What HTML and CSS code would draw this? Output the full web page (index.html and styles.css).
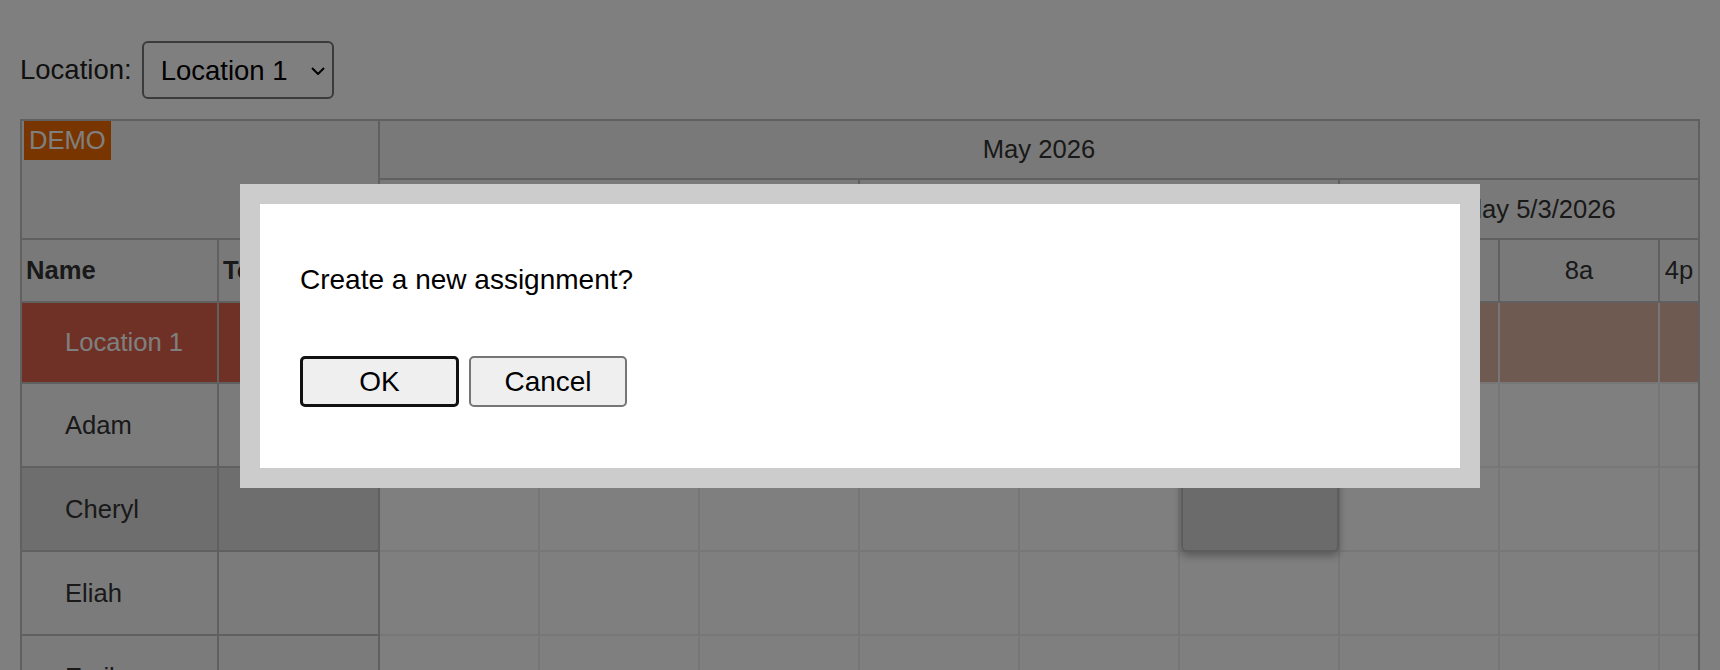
FILE: index.html
```html
<!DOCTYPE html>
<html lang="en">
<head>
    <meta charset="UTF-8">
    <meta name="viewport" content="width=device-width, initial-scale=1.0">
    <title>Scheduler - Assignments</title>
    <link rel="stylesheet" href="styles.css">
</head>
<body>
    <div class="toolbar">
        <label for="location">Location:</label>
        <div class="select-wrap">
            <select id="location" class="location-select">
                <option>Location 1</option>
                <option>Location 2</option>
            </select>
            <svg class="chevron" width="14" height="8" viewBox="0 0 14 8"><path d="M1 1l6 6 6-6" fill="none" stroke="#000" stroke-width="2"/></svg>
        </div>
    </div>

    <div class="scheduler">
        <div class="corner"><span class="demo">DEMO</span></div>
        <div class="head month edge">May 2026</div>
        <div class="head day">Friday 5/1/2026</div>
        <div class="head day">Saturday 5/2/2026</div>
        <div class="head day edge">Sunday 5/3/2026</div>

        <div class="colhead">Name</div>
        <div class="colhead">Total</div>
        <div class="head">12a</div>
        <div class="head">8a</div>
        <div class="head">4p</div>
        <div class="head">12a</div>
        <div class="head">8a</div>
        <div class="head">4p</div>
        <div class="head">12a</div>
        <div class="head">8a</div>
        <div class="head edge">4p</div>

        <div class="rowhead parent">Location 1</div>
        <div class="rowhead parent"></div>
        <div class="cells parent"></div>

        <div class="rowhead">Adam</div>
        <div class="rowhead"></div>
        <div class="cells"></div>

        <div class="rowhead hover">Cheryl</div>
        <div class="rowhead hover"></div>
        <div class="cells"></div>

        <div class="rowhead">Eliah</div>
        <div class="rowhead"></div>
        <div class="cells"></div>

        <div class="rowhead">Emily</div>
        <div class="rowhead"></div>
        <div class="cells"></div>

        <!-- selection being created -->
        <div class="shadow"></div>
    </div>

    <div class="modal-backdrop">
        <div class="modal">
            <div class="modal-text">Create a new assignment?</div>
            <div class="modal-buttons">
                <button class="btn btn-ok" autofocus>OK</button>
                <button class="btn">Cancel</button>
            </div>
        </div>
    </div>
</body>
</html>
```
FILE: styles.css
```css
html, body {
    margin: 0;
    overflow: hidden;
}
body {
    font-family: "Liberation Sans", Arial, sans-serif;
    background-color: #fff;
    color: #222;
}
.toolbar {
    display: flex;
    align-items: center;
    gap: 10px;
    padding: 41px 20px 0;
    font-size: 27.5px;
}
.select-wrap {
    position: relative;
    display: flex;
}
.location-select {
    appearance: none;
    -webkit-appearance: none;
    width: 192px;
    height: 58px;
    padding: 0 0 0 17px;
    border: 2px solid #767676;
    border-radius: 6px;
    background-color: #fff;
    color: #000;
    font-family: inherit;
    font-size: 27.5px;
}
.chevron {
    position: absolute;
    right: 9px;
    top: 26px;
    pointer-events: none;
}
.scheduler {
    position: relative;
    display: grid;
    grid-template-columns: 197px 161px repeat(8, 160px) 38px;
    grid-template-rows: 59px 60px 63px 81px 84px 84px 84px 84px;
    width: 1680px;
    box-sizing: border-box;
    margin: 20px 0 0 20px;
    border: 2px solid #c0c0c0;
    border-bottom: none;
    font-size: 25.6px;
    color: #333;
}
.corner {
    grid-column: 1 / 3;
    grid-row: 1 / 3;
    background-color: #f3f3f3;
    border-right: 2px solid #c0c0c0;
    border-bottom: 2px solid #c0c0c0;
    padding-left: 2px;
}
.demo {
    display: inline-block;
    padding: 0 5px;
    line-height: 39px;
    background-color: #f06a00;
    color: #fff;
}
.head {
    display: flex;
    align-items: center;
    justify-content: center;
    background-color: #f3f3f3;
    border-right: 2px solid #c0c0c0;
    border-bottom: 2px solid #c0c0c0;
    white-space: nowrap;
    overflow: hidden;
}
.head.edge {
    border-right: none;
}
.month {
    grid-column: span 9;
}
.day {
    grid-column: span 3;
}
.colhead {
    display: flex;
    align-items: center;
    padding-left: 4px;
    font-weight: bold;
    background-color: #f3f3f3;
    border-right: 2px solid #c0c0c0;
    border-bottom: 2px solid #c0c0c0;
}
.rowhead {
    display: flex;
    align-items: center;
    padding-left: 43px;
    background-color: #f7f7f7;
    border-right: 2px solid #c0c0c0;
    border-bottom: 2px solid #c0c0c0;
}
.rowhead.parent {
    background-color: #de604a;
    color: #fff;
}
.rowhead.hover {
    background-color: #dcdcdc;
}
.cells {
    grid-column: span 9;
    background-color: #fff;
    background-image: repeating-linear-gradient(to right, transparent 0 158px, #eee 158px 160px);
    border-bottom: 2px solid #eee;
}
.cells.parent {
    background-color: #deb4a4;
}
.shadow {
    position: absolute;
    left: 1159px;
    top: 349px;
    width: 158px;
    height: 82px;
    box-sizing: border-box;
    background-color: #d6d6d6;
    border: 2px solid #bbb;
    border-radius: 6px;
    box-shadow: 0 4px 8px rgba(0,0,0,0.3);
}
.modal-backdrop {
    position: fixed;
    inset: 0;
    display: flex;
    justify-content: center;
    align-items: flex-start;
    padding-top: 184px;
    box-sizing: border-box;
    background-color: rgba(0,0,0,0.5);
}
.modal {
    width: 1240px;
    box-sizing: border-box;
    border: 20px solid #ccc;
    background-color: #fff;
    padding: 60px 40px 61px;
    color: #000;
    font-size: 28px;
}
.modal-text {
    line-height: 32px;
}
.modal-buttons {
    display: flex;
    gap: 10px;
    margin-top: 60px;
}
.btn {
    width: 158px;
    height: 51px;
    padding: 0;
    border: 2px solid #767676;
    border-radius: 5px;
    background-color: #efefef;
    color: #000;
    font-family: inherit;
    font-size: 28px;
}
.btn-ok {
    width: 159px;
    border: 3px solid #111;
    outline: none;
}
```
